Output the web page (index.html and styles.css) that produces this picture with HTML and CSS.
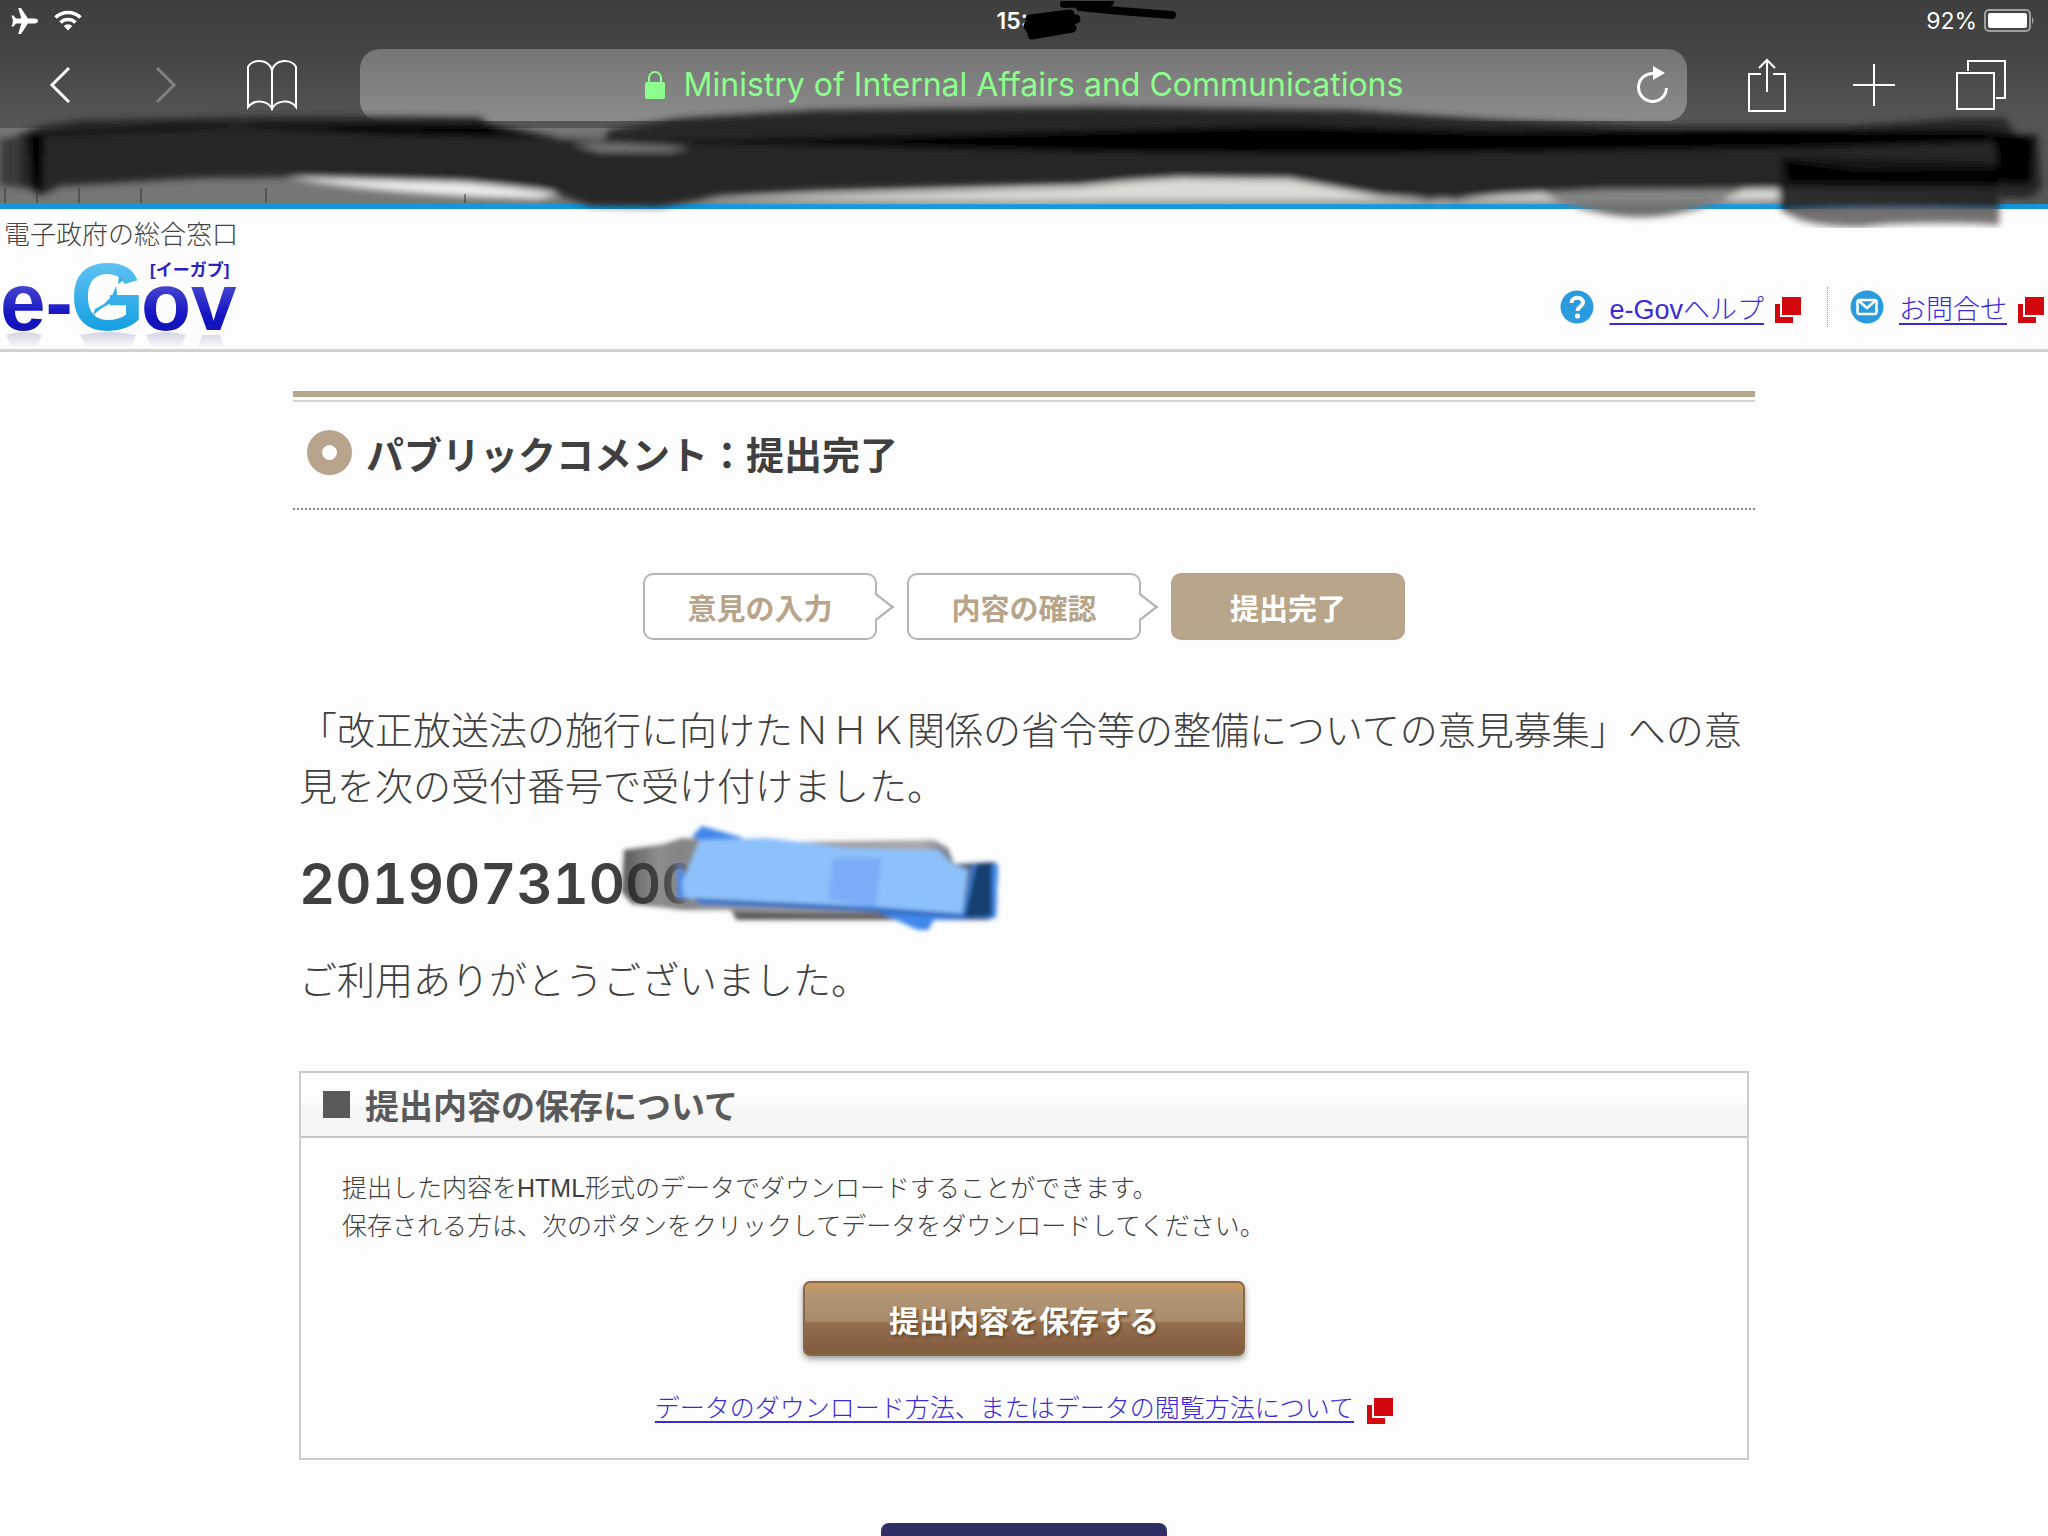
FILE: index.html
```html
<!DOCTYPE html>
<html lang="ja">
<head>
  <meta charset="UTF-8" />
  <title>パブリックコメント：提出完了</title>
  <meta name="viewport" content="width=device-width, initial-scale=1.0" />
  <link rel="stylesheet" href="styles.css">
</head>
<body>

  <!-- Browser bar -->
  <div class="browser">
    <div class="status">
      <div class="status-side">
        <svg width="28" height="26" viewBox="0 0 28 26"><path d="M27 13c0-1.600-1.500-2.400-3.500-2.400h-6.500L10 0H7.200l3.200 10.600H5L2.600 7.500H.6L2 13 .6 18.500h2L5 15.400h5.400L7.200 26H10l7-10.600h6.500c2 0 3.500-.8 3.500-2.400z" fill="#fff"/></svg>
        <svg width="28" height="21" viewBox="0 0 28 21" fill="none" stroke="#fff" stroke-width="3.600"><path d="M1.500 7.500a18 18 0 0 1 25 0M6.500 12.500a11 11 0 0 1 15 0"/><path d="M14 20.500l-4.300-4.400a6.200 6.200 0 0 1 8.600 0z" fill="#fff" stroke="none"/></svg>
      </div>
      <div class="time">15:
        <svg class="ink-time" width="160" height="42" viewBox="0 0 160 42" fill="none" stroke="#000" stroke-linecap="round" stroke-linejoin="round"><path d="M10 18l40-5-42 12 48-7-46 10 42-1-40 7" stroke-width="9"/><path d="M44 3l46-2-30 5 40 4 52 4" stroke-width="8"/></svg>
      </div>
      <div class="status-side status-right">
        <span>92%</span>
        <svg width="50" height="24" viewBox="0 0 50 24"><rect x="1" y="1" width="45" height="21" rx="4" fill="none" stroke="#a0a0a0" stroke-width="2"/><rect x="4" y="4" width="39" height="15" rx="2" fill="#fff"/><path d="M48 8v7c2-1 2-6 0-7z" fill="#a0a0a0"/></svg>
      </div>
    </div>

    <div class="toolbar">
      <div class="tools tools-left">
        <button aria-label="戻る"><svg width="22" height="38" viewBox="0 0 22 38" fill="none" stroke="#fff" stroke-width="3"><path d="M20 2L3 19l17 17"/></svg></button>
        <button aria-label="進む"><svg width="22" height="38" viewBox="0 0 22 38" fill="none" stroke="#818181" stroke-width="3"><path d="M2 2l17 17L2 36"/></svg></button>
        <button aria-label="ブックマーク"><svg width="52" height="52" viewBox="0 0 52 52" fill="none" stroke="#fff" stroke-width="2"><path d="M26 11C22-1 6 0 2 8v40c6-8 20-7 24 2 4-9 18-10 24-2V8C46 0 30-1 26 11zM26 11v38"/></svg></button>
      </div>
      <div class="address">
        <svg class="lock" width="22" height="28" viewBox="0 0 22 28"><rect x="1" y="11" width="20" height="17" rx="2" fill="#8cff8c"/><path d="M5 12V7a6 6 0 0 1 12 0v5" fill="none" stroke="#8cff8c" stroke-width="2"/></svg>
        <span>Ministry of Internal Affairs and Communications</span>
        <button class="reload" aria-label="再読み込み"><svg width="32" height="38" viewBox="0 0 32 38"><path d="M17 7.500A14 14 0 1 0 29.500 22" fill="none" stroke="#fff" stroke-width="3"/><path d="M16 0v14l12-7z" fill="#fff"/></svg></button>
      </div>
      <div class="tools">
        <button aria-label="共有"><svg width="40" height="56" viewBox="0 0 40 56" fill="none" stroke="#fff" stroke-width="2"><path d="M14 17H2v37h36V17H26M20 35V3M12 11l8-8 8 8"/></svg></button>
        <button aria-label="新規タブ"><svg width="44" height="44" viewBox="0 0 44 44" stroke="#fff" stroke-width="2"><path d="M1 22h42M22 1v42"/></svg></button>
        <button aria-label="タブ一覧"><svg width="50" height="50" viewBox="0 0 50 50" fill="none" stroke="#fff" stroke-width="2"><path d="M1 13h37v36H1zM12 11V1h37v37h-9"/></svg></button>
      </div>
    </div>

    <div class="tabs"></div>

    <!-- Marker strokes over the tabs -->
    <svg class="ink-tabs" viewBox="0 0 2048 136" preserveAspectRatio="none">
      <defs>
        <filter id="soft" x="-5%" y="-20%" width="110%" height="140%"><feGaussianBlur stdDeviation="3.5"/></filter>
        <linearGradient id="lens" x1="0" y1="0" x2="0" y2="1"><stop offset=".3" stop-color="#8a8a88"/><stop offset="1" stop-color="#5c5f5c"/></linearGradient>
      </defs>
      <g filter="url(#soft)">
        <path d="M270 82Q400 78 560 102L540 107Q380 104 270 82z" fill="#eee"/>
        <path d="M700 108L1080 96 1180 82 1290 84 1440 110 1560 96 1778 96V108H700z" fill="#dcdcd6"/>
        <path d="M1530 94H1750Q1700 124 1640 125 1580 124 1530 94z" fill="url(#lens)"/>
        <path d="M12 46L40 34 80 28 300 24 480 25 492 36 560 47 605 48 608 38 680 26 820 18 1100 15 1348 18 1500 28 1640 34 1850 34 1960 26 2005 26 2016 42 2038 42 2042 96 2030 106 2000 106V96H1780V97L1600 98 1500 103 1440 108 1380 104 1290 87 1180 86 1080 92 820 98 720 104 660 115 590 114 540 96 460 90 280 85 200 86 60 94 40 104 30 96 8 94z" fill="#262626"/>
        <path d="M0 46H20V94H0z" fill="#3a3a3a"/>
        <path d="M1780 64L2000 70 1999 133Q1940 128 1860 134 1800 134 1780 116z" fill="#151617" opacity=".8"/>
        <path d="M1786 120Q1850 114 1998 118V132Q1930 126 1860 135 1800 134 1786 120z" fill="#757171"/>
        <path d="M28 42L180 33 480 32 560 46 400 43 240 35 44 44 42 100 32 96z" fill="#000"/>
        <path d="M620 50L900 44 1120 38 1280 34 1500 40 1700 38 1980 38 2012 42 2034 46 2032 92 2002 92 1994 50 1800 56 1350 62 1100 60 850 54z" fill="#020202"/>
        <path d="M1782 68L1860 78 2000 76V92L1790 90z" fill="#050505"/>
        <path d="M572 52Q620 50 690 56L670 60 600 60z" fill="#777"/>
      </g>
      <path d="M5 96v15M37 96v15M79 96v15M141 96v15M266 96v15M465 102v9" stroke="#333" stroke-width="1"/>
    </svg>
  </div>

  <!-- Site header -->
  <header class="site-header">
    <a class="logo" href="#" aria-label="e-Gov">
      <span class="logo-lead">電子政府の総合窓口</span>
      <svg class="logo-mark" width="240" height="98" viewBox="0 0 240 98">
        <defs>
          <linearGradient id="navy" x1="0" y1="0" x2="0" y2="1"><stop offset=".3" stop-color="#4a48d0"/><stop offset=".65" stop-color="#1414c4"/><stop offset="1" stop-color="#1212a8"/></linearGradient>
          <linearGradient id="sky" x1="0" y1="0" x2="0" y2="1"><stop offset=".1" stop-color="#68c6f6"/><stop offset="1" stop-color="#0096dc"/></linearGradient>
          <linearGradient id="fade" x1="0" y1="0" x2="0" y2="1"><stop offset="0" stop-color="#9496c0" stop-opacity=".4"/><stop offset="1" stop-color="#9496c0" stop-opacity="0"/></linearGradient>
        </defs>
        <path d="M6 81q18-6 36 0l-6 14H12zM80 81q28-6 56 0l-6 14H88zM146 81q20-6 40 0l-6 14h-28zM202 81h18l5 14h-28z" fill="url(#fade)"/>
        <text class="logo-word" x="0" y="76" fill="url(#navy)">e-</text>
        <text class="logo-cap" x="70" y="76" fill="url(#sky)">G</text>
        <text class="logo-word" x="141" y="76" fill="url(#navy)">ov</text>
        <path d="M119 22l5 4-6 4zM116 32l1 8-6 9-9 5-9 7 2-6 9-5 8-8z" fill="#35aeea"/>
        <text class="logo-kana" x="150" y="22">[イーガブ]</text>
      </svg>
    </a>
    <nav class="header-links">
      <div class="header-item">
        <svg width="34" height="34" viewBox="0 0 34 34"><circle cx="17" cy="17" r="16.500" fill="#2a9bdc"/><path d="M11.500 13c0-7 11.500-7 11.500-.5 0 4-5.500 4-5.500 8.500" fill="none" stroke="#fff" stroke-width="4"/><circle cx="17.500" cy="26" r="2.600" fill="#fff"/></svg>
        <a href="#">e-Govヘルプ</a>
        <svg class="ext" width="26" height="26" viewBox="0 0 26 26"><path d="M0 7h5v13h13v6H0zM7 0h19v18H7z" fill="#d2080e"/></svg>
      </div>
      <div class="header-item">
        <svg width="34" height="34" viewBox="0 0 34 34"><circle cx="17" cy="17" r="16.500" fill="#2a9bdc"/><rect x="7.500" y="10" width="19" height="14" rx="2" fill="none" stroke="#fff" stroke-width="2.500"/><path d="M9 11l8 7 8-7" fill="none" stroke="#fff" stroke-width="2.500"/></svg>
        <a href="#">お問合せ</a>
        <svg class="ext" width="26" height="26" viewBox="0 0 26 26"><path d="M0 7h5v13h13v6H0zM7 0h19v18H7z" fill="#d2080e"/></svg>
      </div>
    </nav>
  </header>

  <main class="content">
    <h1 class="page-title"><span class="ring"></span>パブリックコメント：提出完了</h1>

    <ol class="steps">
      <li class="step">意見の入力</li>
      <li class="step">内容の確認</li>
      <li class="step current">提出完了</li>
    </ol>

    <div class="message">
      <p>「改正放送法の施行に向けたＮＨＫ関係の省令等の整備についての意見募集」への意見を次の受付番号で受け付けました。</p>
      <p class="number">20190731000
        <svg class="ink-number" width="390" height="116" viewBox="0 0 390 116">
          <defs>
            <linearGradient id="smudge" x1="0" y1="0" x2="1" y2="0"><stop offset="0" stop-color="#222" stop-opacity=".75"/><stop offset=".1" stop-color="#444" stop-opacity=".6"/><stop offset=".2" stop-color="#8c8c8c"/><stop offset=".8" stop-color="#aaa"/><stop offset="1" stop-color="#16345c"/></linearGradient>
            <filter id="soft2"><feGaussianBlur stdDeviation="2"/></filter>
          </defs>
          <g filter="url(#soft2)">
            <path d="M6 28L46 22 64 16 180 20 316 18 330 26 336 42 376 40 380 44 378 94 370 98H120L112 88 66 88 14 82 4 70z" fill="url(#smudge)"/>
            <path d="M115 90L370 92V98H118z" fill="#444" opacity=".7"/>
            <path d="M74 14L84 4 126 16 96 26zM60 40L80 82 260 90 300 108 310 108 316 98 378 96 380 42 355 42 345 88 60 76z" fill="#3f88ea"/>
            <path d="M82 18L150 16 230 26 320 28 334 42 350 48 344 92 250 84 66 76 64 60z" fill="#8ec1fb"/>
            <path d="M215 36L264 36 258 84 210 78z" fill="#7cacf7"/>
            <path d="M358 42L374 42 374 94 346 96z" fill="#173f70"/>
            <path d="M78 78L250 88 350 94" fill="none" stroke="#2458a8" stroke-width="3"/>
          </g>
        </svg>
      </p>
      <p>ご利用ありがとうございました。</p>
    </div>

    <section class="save-box">
      <h2><span class="square"></span>提出内容の保存について</h2>
      <div class="save-body">
        <p>提出した内容をHTML形式のデータでダウンロードすることができます。<br>保存される方は、次のボタンをクリックしてデータをダウンロードしてください。</p>
        <button class="save-button">提出内容を保存する</button>
        <div class="save-help">
          <a href="#">データのダウンロード方法、またはデータの閲覧方法について</a>
          <svg class="ext" width="26" height="26" viewBox="0 0 26 26"><path d="M0 7h5v13h13v6H0zM7 0h19v18H7z" fill="#d2080e"/></svg>
        </div>
      </div>
    </section>

    <button class="close-button" aria-label="閉じる"></button>
  </main>

</body>
</html>
```
FILE: styles.css
```css
* {
  box-sizing: border-box;
}

body {
  margin: 0;
  height: 100vh;
  overflow: hidden;
  background: #fdfdfd;
  color: #404040;
  font-family: "Liberation Sans", "Noto Sans CJK JP", sans-serif;
  font-weight: 300;
}

svg {
  display: block;
  flex: none;
}

button {
  border: none;
  padding: 0;
  background: none;
  cursor: pointer;
  font-family: inherit;
}

p,
h1,
h2,
ol {
  margin: 0;
  padding: 0;
}

a {
  color: #3a2ad8;
  text-decoration: underline;
  text-decoration-thickness: 2px;
  text-underline-offset: 4px;
}

/* Browser bar */
.browser {
  position: relative;
  background: linear-gradient(#3f3f3f, #444 25%, #585858 65%);
  border-bottom: 5px solid #1296dc;
  color: #fff;
  font-family: Inter, sans-serif;
  font-weight: 400;
}

.status {
  display: flex;
  align-items: center;
  height: 41px;
  padding: 0 14px 0 11px;
  font-size: 23px;
}

.status-side {
  flex: 1;
  display: flex;
  align-items: center;
  gap: 15px;
}

.status-right {
  justify-content: flex-end;
  gap: 7px;
}

.time {
  position: relative;
  width: 52px;
  font-weight: 600;
}

.ink-time {
  position: absolute;
  left: 23px;
  top: -6px;
}

.toolbar {
  display: flex;
  align-items: center;
  height: 87px;
  padding: 0 14px 0 7px;
}

.tools {
  display: flex;
  margin-left: 26px;
}

.tools-left {
  margin: 0 35px 0 0;
}

.tools button {
  display: flex;
  align-items: center;
  justify-content: center;
  width: 107px;
  height: 72px;
}

.tools-left button {
  width: 106px;
}

.address {
  position: relative;
  flex: 1;
  display: flex;
  align-items: center;
  justify-content: center;
  gap: 18px;
  height: 72px;
  border-radius: 20px;
  background: linear-gradient(#757575, #8c8c8c);
  color: #8cff8c;
  font-size: 32px;
}

.reload {
  position: absolute;
  right: 18px;
  top: 17px;
}

.tabs {
  height: 76px;
  background: linear-gradient(90deg, #767676 30%, #a6a6a0 50%, #8c8c8c 85%, #555);
}

.ink-tabs {
  position: absolute;
  left: 0;
  top: 92px;
  width: 100%;
  height: 136px;
  pointer-events: none;
}

/* Site header */
.site-header {
  display: flex;
  justify-content: space-between;
  height: 143px;
  padding: 7px 4px 0 0;
  border-bottom: 3px solid #d2d2d2;
}

.logo {
  text-decoration: none;
}

.logo-lead {
  display: block;
  padding-left: 4px;
  color: #444;
  font-size: 26px;
  line-height: 38px;
}

.logo-mark {
  overflow: visible;
}

.logo-word {
  font-size: 82px;
  font-weight: bold;
}

.logo-cap {
  font-size: 96px;
  font-weight: bold;
}

.logo-kana {
  font-size: 17px;
  font-weight: bold;
  fill: #2a22c0;
}

.header-links {
  display: flex;
  height: 40px;
  margin-top: 71px;
}

.header-item {
  display: flex;
  align-items: center;
  font-size: 27px;
}

.header-item a {
  margin: 0 11px 0 15px;
}

.header-item + .header-item {
  margin-left: 26px;
  padding-left: 22px;
  border-left: 1px dotted #999;
}

.ext {
  position: relative;
  top: 3px;
}

/* Content */
.content {
  width: 1462px;
  max-width: 100%;
  margin: 39px auto 0;
}

.page-title {
  display: flex;
  align-items: center;
  gap: 14px;
  height: 119px;
  padding-left: 14px;
  border-top: 6px solid #b5a78c;
  border-bottom: 2px dotted #888;
  box-shadow: inset 0 3px #fdfdfd, inset 0 5px #d4d4d4;
  font-size: 38px;
}

.ring {
  width: 45px;
  height: 45px;
  border: 15px solid #b8a48c;
  border-radius: 50%;
}

.steps {
  display: flex;
  justify-content: center;
  gap: 30px;
  margin-top: 63px;
  list-style: none;
}

.step {
  position: relative;
  display: flex;
  align-items: center;
  justify-content: center;
  width: 234px;
  height: 67px;
  border: 2px solid #b4b4b4;
  border-radius: 10px;
  background: #fff;
  color: #b8a48a;
  font-size: 29px;
  font-weight: bold;
}

.step:not(.current)::after {
  content: "";
  position: absolute;
  right: -11px;
  top: 22px;
  width: 18px;
  height: 18px;
  border: solid #b4b4b4;
  border-width: 2px 2px 0 0;
  background: #fff;
  transform: scaleX(1.300) rotate(45deg);
}

.step.current {
  border-color: #b4a48c;
  background: #b8a58a;
  color: #fff;
}

.message {
  margin: 63px 6px 0;
  font-size: 38px;
  line-height: 56px;
}

.number {
  position: relative;
  margin: 37px 0;
  font-family: Inter, sans-serif;
  font-size: 56px;
  font-weight: 600;
  font-variant-numeric: tabular-nums;
  line-height: 64px;
}

.ink-number {
  position: absolute;
  left: 319px;
  top: -30px;
}

.save-box {
  margin: 62px 6px 0;
  border: 2px solid #ccc;
}

.save-box h2 {
  display: flex;
  align-items: center;
  gap: 15px;
  height: 65px;
  padding-left: 22px;
  border-bottom: 2px solid #c4c4c4;
  background: linear-gradient(#fdfdfd 45%, #f6f6f6 55%);
  color: #5a5a5a;
  font-size: 34px;
}

.square {
  width: 27px;
  height: 27px;
  background: #5a5a5a;
}

.save-body {
  padding: 31px 41px 31px;
  font-size: 25px;
  line-height: 38px;
}

.save-button {
  display: block;
  width: 442px;
  height: 75px;
  margin: 36px auto 33px;
  border: 2px solid #8a6844;
  border-radius: 7px;
  background: linear-gradient(#c69a66 5%, #b39674 16%, #a88c6c 53%, #94704e 57%, #865c40 90%, #80603a);
  box-shadow: 0 3px 6px rgba(0, 0, 0, 0.4);
  color: #fff;
  font-size: 30px;
  font-weight: bold;
  text-shadow: 2px 2px 3px #6a4c2c;
}

.save-help {
  display: flex;
  align-items: center;
  justify-content: center;
  gap: 13px;
}

.close-button {
  display: block;
  width: 286px;
  height: 76px;
  margin: 63px auto 0;
  border-radius: 8px;
  background: linear-gradient(#2e2e66, #35354f);
}
```
